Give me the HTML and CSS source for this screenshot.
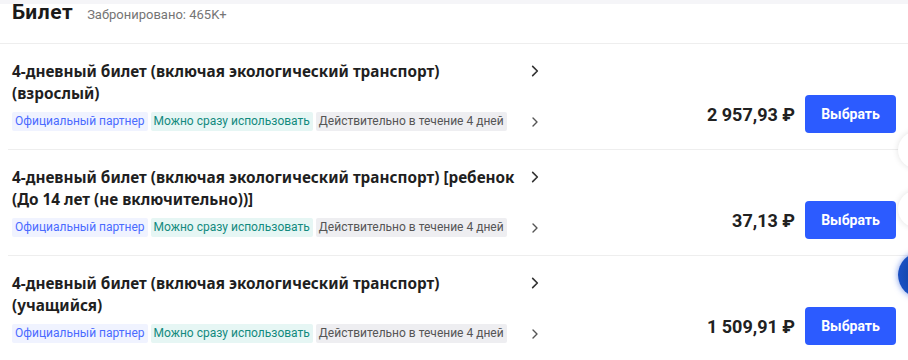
FILE: index.html
```html
<!DOCTYPE html>
<html lang="ru">
<head>
<meta charset="utf-8">
<link rel="stylesheet" href="styles.css">
</head>
<body>
<div class="header">
  <h2 class="title">Билет</h2>
  <span class="booked">Забронировано: 465K+</span>
</div>
<div class="list">
  <div class="row">
    <div class="info">
      <div class="name-line">
        <div class="name">4-дневный билет (включая экологический транспорт) (взрослый)</div>
        <svg class="chev" viewBox="0 0 12 12"><path d="M4 2l4 4-4 4"/></svg>
      </div>
      <div class="tags-line">
        <div class="tags">
          <span class="tag blue">Официальный партнер</span>
          <span class="tag teal">Можно сразу использовать</span>
          <span class="tag gray">Действительно в течение 4 дней</span>
        </div>
        <svg class="chev small" viewBox="0 0 12 12"><path d="M4 2l4 4-4 4"/></svg>
      </div>
    </div>
    <div class="buy">
      <span class="price">2 957,93 ₽</span>
      <button class="btn">Выбрать</button>
    </div>
  </div>
  <div class="row">
    <div class="info">
      <div class="name-line">
        <div class="name">4-дневный билет (включая экологический транспорт) [ребенок (До 14 лет (не включительно))]</div>
        <svg class="chev" viewBox="0 0 12 12"><path d="M4 2l4 4-4 4"/></svg>
      </div>
      <div class="tags-line">
        <div class="tags">
          <span class="tag blue">Официальный партнер</span>
          <span class="tag teal">Можно сразу использовать</span>
          <span class="tag gray">Действительно в течение 4 дней</span>
        </div>
        <svg class="chev small" viewBox="0 0 12 12"><path d="M4 2l4 4-4 4"/></svg>
      </div>
    </div>
    <div class="buy">
      <span class="price">37,13 ₽</span>
      <button class="btn">Выбрать</button>
    </div>
  </div>
  <div class="row">
    <div class="info">
      <div class="name-line">
        <div class="name">4-дневный билет (включая экологический транспорт) (учащийся)</div>
        <svg class="chev" viewBox="0 0 12 12"><path d="M4 2l4 4-4 4"/></svg>
      </div>
      <div class="tags-line">
        <div class="tags">
          <span class="tag blue">Официальный партнер</span>
          <span class="tag teal">Можно сразу использовать</span>
          <span class="tag gray">Действительно в течение 4 дней</span>
        </div>
        <svg class="chev small" viewBox="0 0 12 12"><path d="M4 2l4 4-4 4"/></svg>
      </div>
    </div>
    <div class="buy">
      <span class="price">1 509,91 ₽</span>
      <button class="btn">Выбрать</button>
    </div>
  </div>
</div>
<div class="float f1"></div>
<div class="float f2"></div>
<div class="float f3"></div>
</body>
</html>
```

FILE: styles.css
```css
html, body {
  margin: 0;
  padding: 0;
  background: #fff;
  font-family: Roboto, "Noto Sans", sans-serif;
  color: #212121;
  overflow: hidden;
}
.header {
  display: flex;
  align-items: baseline;
  gap: 14px;
  padding: 0 12px 18px;
  background: linear-gradient(#f5f5f8 0, #f5f5f8 4px, #fff 4px);
  border-bottom: 1px solid #eeeeee;
}
.title {
  margin: 0;
  font-size: 21px;
  font-weight: 700;
  letter-spacing: 0.5px;
  line-height: 25px;
  color: #1a1a1a;
}
.booked {
  font-size: 13px;
  color: #757575;
}
.list {
  margin-left: 8px;
}
.row {
  display: flex;
  justify-content: space-between;
  align-items: flex-end;
  padding: 16px 12px 16px 4px;
  border-bottom: 1px solid #eeeeee;
}
.info {
  width: 530px;
  display: flex;
  flex-direction: column;
  gap: 8px;
  padding-bottom: 2px;
}
.name-line {
  display: flex;
  justify-content: space-between;
  align-items: flex-start;
}
.name {
  width: 510px;
  font-family: "Noto Sans", sans-serif;
  font-size: 15.3px;
  font-weight: 700;
  line-height: 22px;
  color: #1f1f1f;
}
.chev {
  width: 14px;
  height: 14px;
  margin-top: 4px;
  fill: none;
  stroke: #333;
  stroke-width: 1.4;
  stroke-linecap: round;
  stroke-linejoin: round;
}
.chev.small {
  width: 12px;
  height: 12px;
  margin-top: 0;
  margin-right: 1px;
  stroke: #555;
}
.tags-line {
  display: flex;
  justify-content: space-between;
  align-items: center;
}
.tags {
  display: flex;
  gap: 3px;
}
.tag {
  font-size: 12px;
  line-height: 19px;
  padding: 0 3px;
  border-radius: 2px;
}
.tag.blue { background: #f0f3ff; color: #4a6bff; }
.tag.teal { background: #e6f6f4; color: #128a7e; }
.tag.gray { background: #eeeef1; color: #555; }
.buy {
  display: flex;
  align-items: center;
  gap: 10px;
}
.price {
  font-size: 18px;
  font-weight: 700;
  color: #212121;
}
.btn {
  width: 91px;
  height: 38px;
  border: none;
  border-radius: 4px;
  background: #2c5bff;
  color: #fff;
  font-family: inherit;
  font-size: 14px;
  font-weight: 700;
}
.float {
  position: absolute;
  border-radius: 50%;
}
.f1 {
  left: 898px;
  top: 131px;
  width: 40px;
  height: 38px;
  background: #fff;
  box-shadow: 0 0 6px rgba(0,0,0,0.12);
}
.f2 {
  left: 898px;
  top: 190px;
  width: 40px;
  height: 38px;
  background: #fff;
  box-shadow: 0 0 6px rgba(0,0,0,0.12);
}
.f3 {
  left: 898px;
  top: 252px;
  width: 46px;
  height: 46px;
  background: radial-gradient(circle at 60% 50%, #0a3a8a, #1a4fc0 70%);
  box-shadow: 0 0 6px rgba(30,80,220,0.6);
}
```
